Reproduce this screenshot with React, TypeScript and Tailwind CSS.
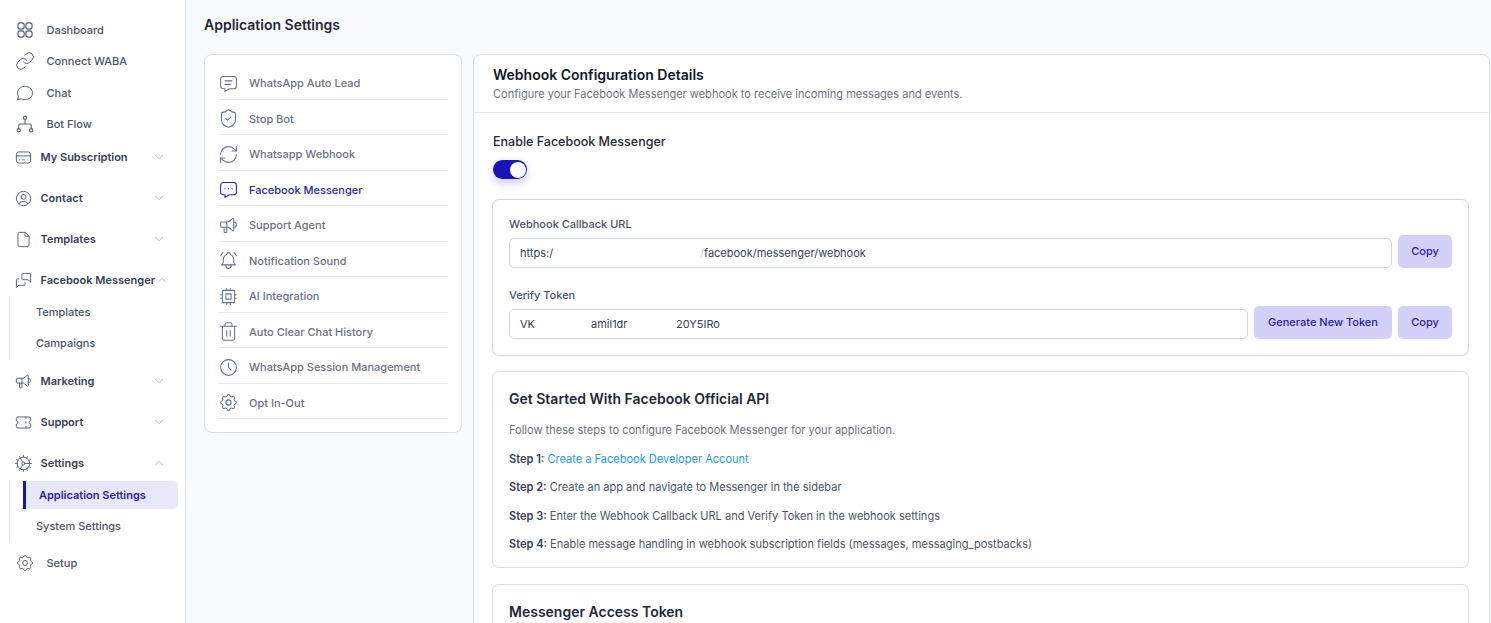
import {
  TbMessageCircle,
  TbCreditCard,
  TbUserCircle,
  TbFile,
  TbMessages,
  TbSpeakerphone,
  TbTicket,
  TbSettings,
  TbChevronDown,
  TbChevronUp,
  TbMessage,
  TbMessageDots,
  TbBellRinging,
  TbCpu,
  TbClock,
} from "react-icons/tb";
import { Cog, Link, RefreshCw, ShieldCheck, Trash2 } from "lucide-react";

const DashboardIcon = ({ className }: { className?: string }) => (
  <svg viewBox="0 0 24 24" fill="none" stroke="currentColor" strokeWidth={1.4} className={className}>
    <rect x="3.5" y="3.5" width="7.5" height="7.5" rx="2.8" />
    <rect x="13" y="3.5" width="7.5" height="7.5" rx="2.8" />
    <rect x="3.5" y="13" width="7.5" height="7.5" rx="2.8" />
    <rect x="13" y="13" width="7.5" height="7.5" rx="2.8" />
  </svg>
);

const FlowIcon = ({ className }: { className?: string }) => (
  <svg viewBox="0 0 24 24" fill="none" stroke="currentColor" strokeWidth={1.3} className={className}>
    <circle cx="12" cy="4.5" r="2" />
    <circle cx="4.5" cy="19.5" r="2" />
    <circle cx="19.5" cy="19.5" r="2" />
    <path d="M12 6.5V12M4.5 17.5V14a2 2 0 0 1 2-2h11a2 2 0 0 1 2 2v3.5" />
  </svg>
);

const NavLink = ({ icon: Icon, label }: { icon: any; label: string }) => (
  <div className="flex h-[31.5px] items-center">
    <Icon className="ml-[14.5px] h-[20px] w-[20px] shrink-0 text-[#566072]" strokeWidth={1.2} />
    <span className="ml-[12px] text-[11px] font-medium text-[#4b5563]">{label}</span>
  </div>
);

const NavSection = ({ icon: Icon, label, open }: { icon: any; label: string; open?: boolean }) => (
  <div className="flex h-[34px] items-center">
    <Icon className="ml-[13.5px] h-[19px] w-[19px] shrink-0 text-[#566072]" strokeWidth={1.2} />
    <span className="ml-[8px] whitespace-nowrap text-[11px] font-semibold text-[#374151]">{label}</span>
    <span className="ml-auto mr-[19px] text-[#9ca3af]">
      {open ? <TbChevronUp className="h-[14px] w-[14px]" strokeWidth={1.2} /> : <TbChevronDown className="h-[14px] w-[14px]" strokeWidth={1.2} />}
    </span>
  </div>
);

const SubLink = ({ label }: { label: string }) => (
  <div className="flex h-[31px] items-center pl-[26px] text-[11px] font-medium text-[#4b5563]">{label}</div>
);

const settingsItems = [
  { icon: TbMessage, label: "WhatsApp Auto Lead" },
  { icon: ShieldCheck, label: "Stop Bot" },
  { icon: RefreshCw, label: "Whatsapp Webhook" },
  { icon: TbMessageDots, label: "Facebook Messenger", active: true },
  { icon: TbSpeakerphone, label: "Support Agent" },
  { icon: TbBellRinging, label: "Notification Sound" },
  { icon: TbCpu, label: "AI Integration" },
  { icon: Trash2, label: "Auto Clear Chat History" },
  { icon: TbClock, label: "WhatsApp Session Management" },
  { icon: TbSettings, label: "Opt In-Out" },
];

const CopyButton = () => (
  <button className="flex h-[33px] w-[54px] shrink-0 items-center justify-center rounded-[5px] bg-[#d3d1f9] text-[11px] font-medium text-[#2a1f9e]">
    Copy
  </button>
);

export default function App() {
  return (
    <div className="flex h-[623px] w-[1491px] overflow-hidden bg-[#f8fafc] font-['Inter',sans-serif]">
      {/* sidebar */}
      <aside className="w-[186px] shrink-0 border-r border-[#e2e8f0] bg-white pt-[14px]">
        <NavLink icon={DashboardIcon} label="Dashboard" />
        <NavLink icon={Link} label="Connect WABA" />
        <NavLink icon={TbMessageCircle} label="Chat" />
        <NavLink icon={FlowIcon} label="Bot Flow" />
        <div className="flex flex-col gap-[7px]">
          <NavSection icon={TbCreditCard} label="My Subscription" />
          <NavSection icon={TbUserCircle} label="Contact" />
          <NavSection icon={TbFile} label="Templates" />
          <NavSection icon={TbMessages} label="Facebook Messenger" open />
        </div>
        <div className="ml-[9px] border-l border-[#e5e7eb]">
          <SubLink label="Templates" />
          <SubLink label="Campaigns" />
        </div>
        <div className="mt-[5px] flex flex-col gap-[7px]">
          <NavSection icon={TbSpeakerphone} label="Marketing" />
          <NavSection icon={TbTicket} label="Support" />
          <NavSection icon={Cog} label="Settings" open />
        </div>
        <div className="ml-[9px] mt-[1px] flex flex-col gap-[2px] border-l border-[#e5e7eb]">
          <div className="ml-[13px] mr-[7px] flex h-[28px] items-center rounded-r-[5px] border-l-[3px] border-[#1a13b8] bg-[#e8e8fb] pl-[13px] text-[11px] font-semibold text-[#2a1fa8]">
            Application Settings
          </div>
          <SubLink label="System Settings" />
        </div>
        <div className="mt-[5px]">
          <NavLink icon={TbSettings} label="Setup" />
        </div>
      </aside>

      {/* page */}
      <main className="min-w-0 flex-1 pl-[18px] pr-[1px]">
        <h1 className="flex h-[54px] items-center pb-[6px] text-[14px] font-semibold text-[#1f2937]">Application Settings</h1>
        <div className="flex items-start gap-[11px]">
          {/* settings menu */}
          <div className="w-[258px] shrink-0 rounded-[8px] border border-[#d8dfea] bg-white px-[13px] pb-[13px] pt-[9px]">
            {settingsItems.map((item) => (
              <div key={item.label} className="flex h-[35.5px] items-center border-b border-[#e5e9f0] pt-[4px]">
                <item.icon
                  className={`h-[21px] w-[21px] shrink-0 ${item.active ? "text-[#2a1fc8]" : "text-[#64748b]"}`}
                  strokeWidth={1.2}
                />
                <span className={`ml-[10px] text-[11px] font-medium ${item.active ? "text-[#2a1fa8]" : "text-[#6b7280]"}`}>
                  {item.label}
                </span>
              </div>
            ))}
          </div>

          {/* config panel */}
          <div className="min-w-0 flex-1 rounded-t-[8px] border border-[#d8dfea] bg-white">
            <div className="h-[58px] border-b border-[#e2e8f0] px-[19px] pt-[11px]">
              <h2 className="text-[14px] font-semibold leading-[18px] text-[#111827]">Webhook Configuration Details</h2>
              <p className="text-[11.04px] leading-[20px] text-[#6b7280]">
                Configure your Facebook Messenger webhook to receive incoming messages and events.
              </p>
            </div>
            <div className="pl-[18px] pr-[20px]">
              <div className="pl-[1px] pt-[19px] text-[12.5px] font-medium leading-[20px] text-[#1f2937]">Enable Facebook Messenger</div>
              <div className="ml-[1px] mt-[8px] flex h-[19px] w-[34px] items-center justify-end rounded-full bg-[#1a13b8] pr-[1.5px] shadow-[0_4px_8px_rgba(26,19,184,0.22)]">
                <div className="h-[16px] w-[16px] rounded-full bg-white" />
              </div>

              <section className="mt-[20px] h-[157px] rounded-[7px] border border-[#cfd6e2] px-[16px] pt-[16px]">
                <div className="text-[11px] font-medium leading-[16px] text-[#4b5563]">Webhook Callback URL</div>
                <div className="mt-[3px] flex items-end gap-[6px]">
                  <div className="flex h-[30px] min-w-0 flex-1 items-center rounded-[5px] border border-[#d1d8e4] pl-[10px] text-[11px] text-[#374151]">
                    <span className="w-[180px]">https:/</span>
                    <span className="w-[4px] text-[#cbd5e1]">/</span>
                    <span>facebook/messenger/webhook</span>
                  </div>
                  <CopyButton />
                </div>
                <div className="mt-[19px] text-[11px] font-medium leading-[16px] text-[#4b5563]">Verify Token</div>
                <div className="mt-[3px] flex items-end gap-[6px]">
                  <div className="flex h-[30px] min-w-0 flex-1 items-center rounded-[5px] border border-[#d1d8e4] pl-[10px] text-[11px] text-[#374151]">
                    <span className="w-[71px]">VK</span>
                    <span className="w-[85px]">amil1dr</span>
                    <span>20Y5IRo</span>
                  </div>
                  <button className="flex h-[33px] w-[138px] shrink-0 items-center justify-center rounded-[5px] bg-[#d3d1f9] text-[11px] font-medium text-[#2a1f9e]">
                    Generate New Token
                  </button>
                  <CopyButton />
                </div>
              </section>

              <section className="mt-[15px] h-[197px] rounded-[7px] border border-[#d8dfea] px-[16px] pt-[17px]">
                <h3 className="text-[14px] font-semibold leading-[20px] text-[#1f2937]">Get Started With Facebook Official API</h3>
                <div className="mt-[12px] flex flex-col gap-[10.5px] text-[11.04px] leading-[18px] text-[#4b5563]">
                  <p className="text-[#6b7280]">Follow these steps to configure Facebook Messenger for your application.</p>
                  <p>
                    <b className="font-semibold text-[#374151]">Step 1:</b>{" "}
                    <span className="text-[#1e9bf0]">Create a Facebook Developer Account</span>
                  </p>
                  <p>
                    <b className="font-semibold text-[#374151]">Step 2:</b> Create an app and navigate to Messenger in the sidebar
                  </p>
                  <p>
                    <b className="font-semibold text-[#374151]">Step 3:</b> Enter the Webhook Callback URL and Verify Token in the webhook settings
                  </p>
                  <p>
                    <b className="font-semibold text-[#374151]">Step 4:</b> Enable message handling in webhook subscription fields (messages, messaging_postbacks)
                  </p>
                </div>
              </section>

              <section className="mt-[16px] h-[60px] rounded-t-[7px] border border-[#d8dfea] px-[16px] pt-[17px]">
                <h3 className="text-[14px] font-semibold leading-[20px] text-[#1f2937]">Messenger Access Token</h3>
              </section>
            </div>
          </div>
        </div>
      </main>
    </div>
  );
}
